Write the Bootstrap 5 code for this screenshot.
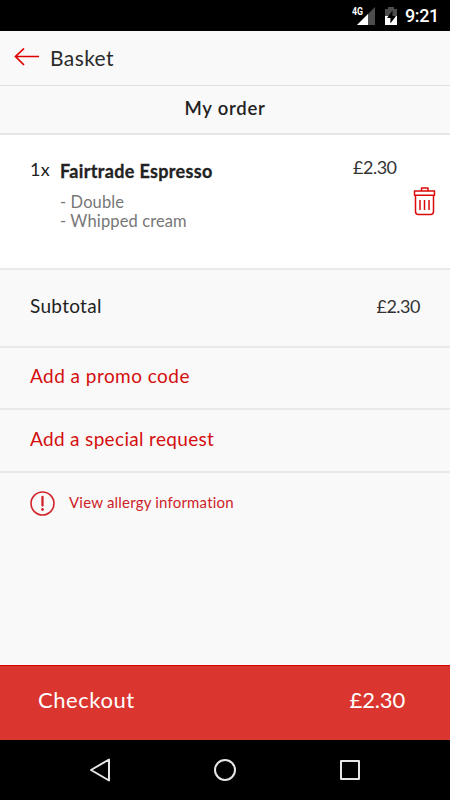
<!DOCTYPE html>
<html lang="en">
<head>
<meta charset="utf-8">
<meta name="viewport" content="width=device-width, initial-scale=1">
<title>Basket</title>
<link href="https://cdn.jsdelivr.net/npm/bootstrap@5.3.0/dist/css/bootstrap.min.css" rel="stylesheet">
<style>
  body { font-family: Lato, "Open Sans", sans-serif; background: #f9f9f9; color: #222; line-height: 24px; height: 800px; overflow: hidden; font-size: 19px; }
  svg { display: block; flex: none; }
  .status-bar { height: 31px; background: #000; padding-right: 11px; padding-top: 1px; }
  .clock { font: 500 18px/24px Roboto, sans-serif; letter-spacing: -.35px; color: #fff; margin-left: 7px; }
  .app-header { height: 55px; border-bottom: 1px solid #dfdfdf; padding-left: 14px; }
  .app-title { font-size: 21px; letter-spacing: .4px; margin: -1px 0 0 10px; color: #2b2b2b; }
  .order-title { height: 49px; border-bottom: 2px solid #e6e6e6; font-size: 18.5px; font-weight: 600; letter-spacing: .75px; margin: 0; padding-top: 9px; line-height: 26px; }
  .order-item { height: 133px; background: #fff; padding: 22px 14px 0 30px; }
  .qty { width: 30px; font-size: 18px; letter-spacing: .3px; }
  .item-name { font-size: 18px; font-weight: 700; letter-spacing: .34px; margin: 2px 0 10px; line-height: 24px; -webkit-text-stroke: .3px; }
  .extras { font-size: 16.5px; line-height: 19px; color: #777; letter-spacing: .12px; }
  .price { font-size: 18px; letter-spacing: -.5px; color: #333; }
  .item-side { width: 83px; margin-top: -2px; }
  .trash-icon { margin-top: 7px; }
  .line-row { padding: 0 30px 4px; border-top: 2px solid #e9e9e9; }
  .subtotal-row { height: 78px; }
  .subtotal-label { letter-spacing: .3px; }
  .action-row { height: 62px; color: #d40e0e; letter-spacing: .45px; }
  .special-row { height: 63px; letter-spacing: .33px; }
  .allergy-row { height: 62px; padding-bottom: 0; font-size: 15px; color: #cd2229; letter-spacing: .2px; gap: 14px; }
  .allergy { margin-top: -2px; }
  .checkout-bar { height: 75px; background: #da352e; border-top: 1px solid #d50000; color: #fff; font-size: 22px; padding: 0 45px 7px 38px; }
  .checkout { letter-spacing: .55px; }
  .total { letter-spacing: -.15px; }
  .nav-keys { height: 60px; background: #000; }
</style>
<script src="https://cdn.jsdelivr.net/npm/bootstrap@5.3.0/dist/js/bootstrap.bundle.min.js"></script>
</head>
<body class="d-flex flex-column">
  <div class="status-bar d-flex align-items-center justify-content-end">
    <svg width="24" height="20" viewBox="0 0 24 20">
      <path d="M23 1v18H5z" fill="#4d4d4d"/><path d="M16 8v11H5z" fill="#fff"/>
      <text x="0" y="9" font-family="Roboto" font-weight="700" font-size="10" textLength="11" lengthAdjust="spacingAndGlyphs" fill="#fff" stroke="#000" stroke-width="2" paint-order="stroke">4G</text>
    </svg>
    <svg class="ms-2" width="14" height="20" viewBox="0 0 14 20">
      <path d="M1 3h3V1h6v2h3v16H1z" fill="#4d4d4d"/><path d="M1 10h12v9H1z" fill="#fff"/>
      <path d="M8.500 4.500L3 12h3.400v5.500L12 10H8.500z" fill="#000"/>
    </svg>
    <span class="clock">9:21</span>
  </div>
  <header class="app-header d-flex align-items-center">
    <svg width="26" height="20" viewBox="0 0 26 20" fill="none" stroke="#e00000" stroke-width="1.700"><path d="M1.500 8.500H25M10 0.500L1.500 8.500l8.500 8.500"/></svg>
    <span class="app-title">Basket</span>
  </header>
  <h1 class="order-title text-center">My order</h1>
  <section class="order-item d-flex">
    <span class="qty">1x</span>
    <div class="flex-grow-1">
      <h2 class="item-name">Fairtrade Espresso</h2>
      <div class="extras">- Double</div>
      <div class="extras">- Whipped cream</div>
    </div>
    <div class="item-side d-flex flex-column">
      <span class="price">£2.30</span>
      <svg class="trash-icon align-self-end" width="23" height="30" viewBox="0 0 23 30" fill="none" stroke="#dc0a0a" stroke-width="1.500" stroke-linejoin="round"><path d="M8.500 5V2H15V5M1.500 5H21.500V9.200H1.500zM2.500 9.200V25.500Q2.500 28.500 5.500 28.500H17.500Q20.500 28.500 20.500 25.500V9.200M7 14V24M11.500 14V24M16 14V24"/></svg>
    </div>
  </section>
  <section class="line-row subtotal-row d-flex align-items-center justify-content-between">
    <span class="subtotal-label">Subtotal</span><span class="price">£2.30</span>
  </section>
  <div class="line-row action-row d-flex align-items-center"><span>Add a promo code</span></div>
  <div class="line-row action-row special-row d-flex align-items-center"><span>Add a special request</span></div>
  <div class="line-row allergy-row d-flex align-items-center">
    <svg width="25" height="25" viewBox="0 0 25 25" fill="none" stroke="#d2232a" stroke-width="1.600"><circle cx="12.500" cy="12.500" r="11.500"/><path d="M12.500 6V14.500" stroke-width="2.300" stroke-linecap="round"/><circle cx="12.500" cy="18.500" r="1.400" fill="#d2232a" stroke="none"/></svg>
    <span class="allergy">View allergy information</span>
  </div>
  <footer class="mt-auto">
    <div class="checkout-bar d-flex align-items-center justify-content-between">
      <span class="checkout">Checkout</span><span class="total">£2.30</span>
    </div>
    <div class="nav-keys d-flex align-items-center justify-content-center">
      <svg width="270" height="26" viewBox="0 0 270 26" fill="none" stroke="#e6e6e6" stroke-width="2" stroke-linejoin="round"><path d="M19 2.500V23.500L1 13z"/><circle cx="135" cy="13" r="10"/><path d="M251 4h18v18h-18z"/></svg>
    </div>
  </footer>
</body>
</html>
